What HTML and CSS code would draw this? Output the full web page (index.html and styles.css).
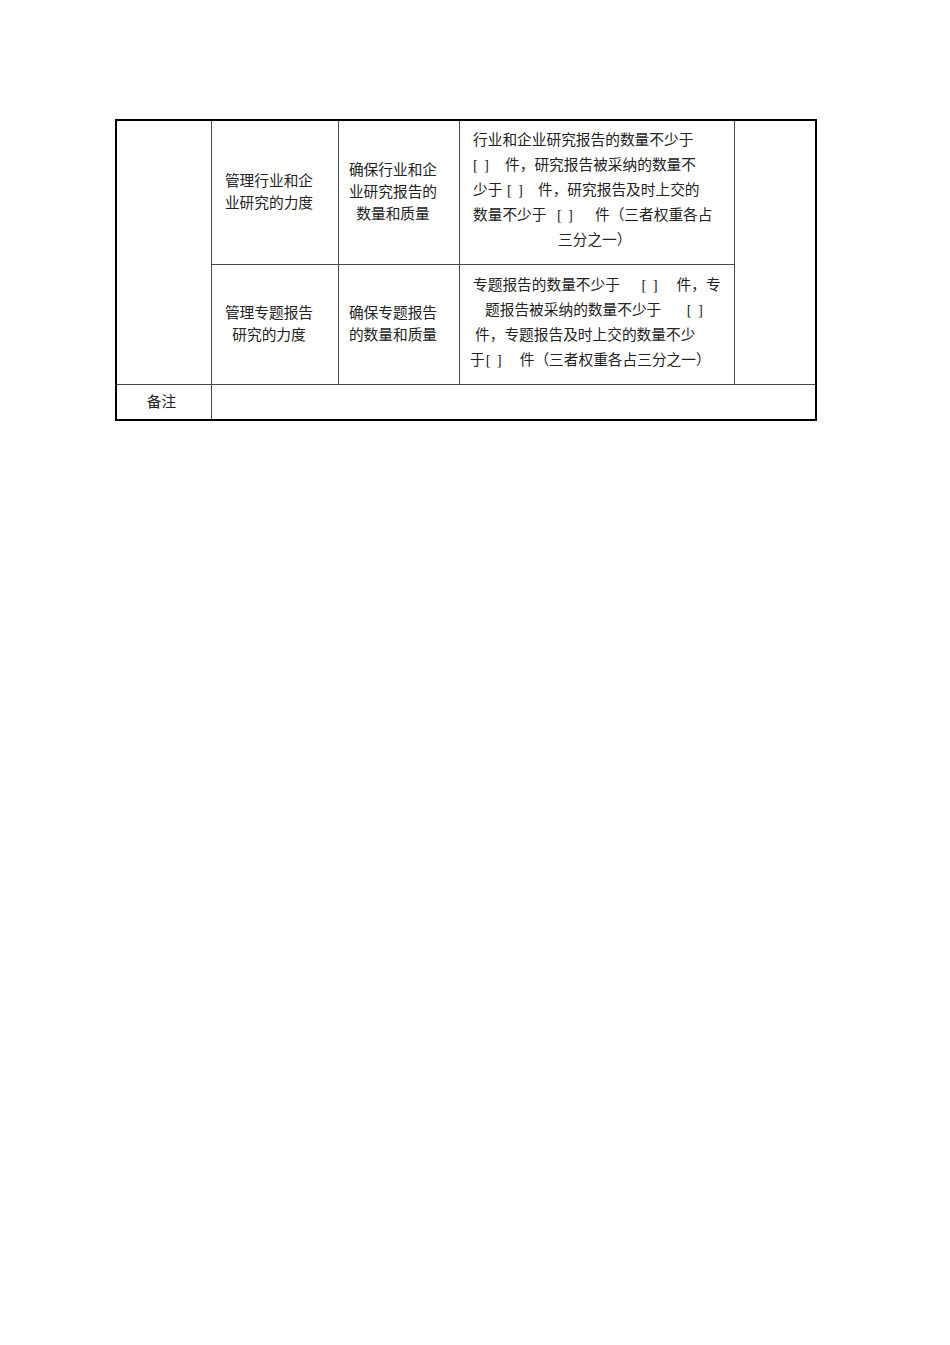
FILE: index.html
```html
<!DOCTYPE html>
<html lang="zh-CN">
<head>
<meta charset="utf-8">
<title>表格</title>
<link rel="stylesheet" href="styles.css">
</head>
<body>
<div class="sheet">
  <div class="cell c1 span2"></div>
  <div class="cell mid"><div class="lines22">
    <div>管理行业和企</div>
    <div>业研究的力度</div>
  </div></div>
  <div class="cell mid"><div class="lines22">
    <div>确保行业和企</div>
    <div>业研究报告的</div>
    <div>数量和质量</div>
  </div></div>
  <div class="cell txt"><div class="lines25">
    <div>行业和企业研究报告的数量不少于</div>
    <div><span class="bk mr16"><span>[</span><span>]</span></span>件，研究报告被采纳的数量不</div>
    <div>少于<span class="bk ml4 mr15"><span>[</span><span>]</span></span>件，研究报告及时上交的</div>
    <div>数量不少于<span class="bk ml10 mr22"><span>[</span><span>]</span></span>件（三者权重各占</div>
    <div class="pl85">三分之一）</div>
  </div></div>
  <div class="cell c5 span2"></div>

  <div class="cell mid"><div class="lines22">
    <div>管理专题报告</div>
    <div>研究的力度</div>
  </div></div>
  <div class="cell mid"><div class="lines22">
    <div>确保专题报告</div>
    <div>的数量和质量</div>
  </div></div>
  <div class="cell txt"><div class="lines25">
    <div>专题报告的数量不少于<span class="bk ml21 mr19"><span>[</span><span>]</span></span>件，专</div>
    <div class="pl12">题报告被采纳的数量不少于<span class="bk ml25"><span>[</span><span>]</span></span></div>
    <div class="pl2">件，专题报告及时上交的数量不少</div>
    <div class="nl3">于<span class="bk ml1 mr18"><span>[</span><span>]</span></span>件（三者权重各占三分之一）</div>
  </div></div>

  <div class="cell note">备注</div>
  <div class="cell wide"></div>
</div>
</body>
</html>
```
FILE: styles.css
```css
html, body {
  margin: 0;
  padding: 0;
  background: #ffffff;
}
body {
  font-family: "Liberation Serif", "Noto Sans CJK SC", serif;
  font-size: 14.7px;
  color: #222222;
}
.sheet {
  margin: 119px 0 0 115px;
  width: 698px;
  border: 2px solid #000;
  display: grid;
  grid-template-columns: 94px 126px 120px 274px 80px;
  grid-template-rows: 143px 119px 34px;
  gap: 1px;
  background: #4a4a4a;
}
.cell {
  background: #fff;
  display: flex;
  align-items: center;
}
.span2 { grid-row: span 2; }
.wide { grid-column: span 4; }
.mid {
  justify-content: center;
  padding-right: 12px;
  padding-bottom: 4px;
  font-family: "Noto Sans CJK SC", sans-serif;
}
.lines22 {
  line-height: 22px;
  text-align: center;
}
.txt {
  padding-left: 13px;
  padding-bottom: 4px;
}
.lines25 {
  line-height: 25px;
  white-space: nowrap;
}
.note {
  justify-content: center;
  padding-right: 5px;
  padding-bottom: 3px;
  font-family: "Noto Sans CJK SC", sans-serif;
}
.bk {
  display: inline-flex;
  justify-content: space-between;
  width: 16px;
}
.ml1 { margin-left: 1px; }
.ml4 { margin-left: 4.6px; }
.ml10 { margin-left: 10.5px; }
.ml21 { margin-left: 21.7px; }
.ml25 { margin-left: 25.6px; }
.mr15 { margin-right: 15px; }
.mr16 { margin-right: 16px; }
.mr18 { margin-right: 18px; }
.mr19 { margin-right: 19px; }
.mr22 { margin-right: 22px; }
.pl85 { padding-left: 85px; }
.pl12 { padding-left: 12px; }
.pl2 { padding-left: 2px; }
.nl3 { margin-left: -3px; }
```
